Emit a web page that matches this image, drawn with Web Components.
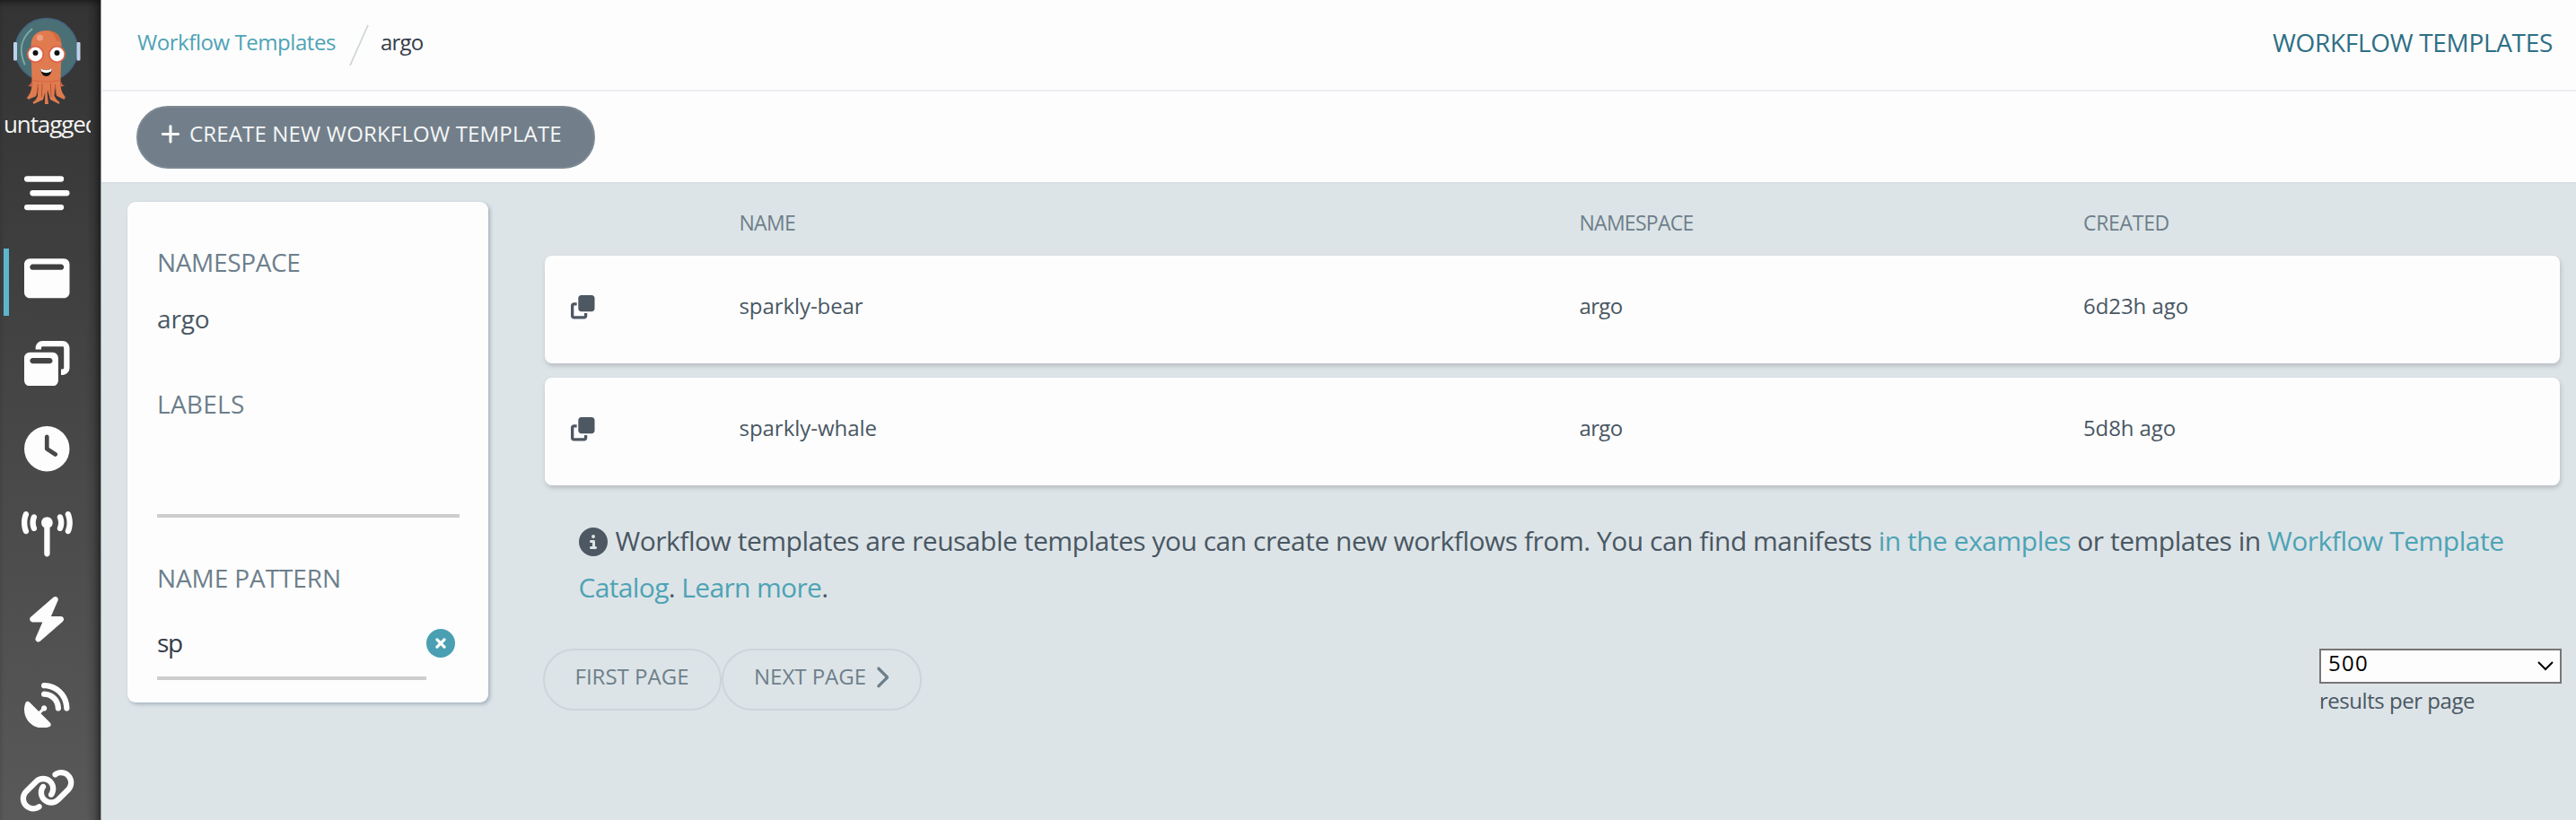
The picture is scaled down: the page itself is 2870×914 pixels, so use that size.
<!DOCTYPE html>
<html lang="en">
<head>
<meta charset="utf-8">
<title>Workflow Templates</title>
<style>
html,body{margin:0;height:100%;overflow:hidden}
body{font-family:"Open Sans","Noto Sans",sans-serif;background:#dde4e7;color:#495763}
</style>
</head>
<body>
<wf-app></wf-app>
<script>
const ICONS={
menu:['0 0 512 512','M32 64H416a32 32 0 0 1 0 64H32a32 32 0 0 1 0-64zM96 224H480a32 32 0 0 1 0 64H96a32 32 0 0 1 0-64zM32 384H416a32 32 0 0 1 0 64H32a32 32 0 0 1 0-64z'],
window:['0 0 512 512','M64 32C28.7 32 0 60.7 0 96V416c0 35.3 28.7 64 64 64H448c35.3 0 64-28.7 64-64V96c0-35.3-28.7-64-64-64H64zM96 96H416c17.7 0 32 14.3 32 32s-14.3 32-32 32H96c-17.7 0-32-14.3-32-32s14.3-32 32-32z'],
restore:['0 0 512 512','M432 64H208c-8.8 0-16 7.2-16 16V96H128V80c0-44.2 35.8-80 80-80H432c44.2 0 80 35.8 80 80V304c0 44.2-35.8 80-80 80H416V320h16c8.8 0 16-7.2 16-16V80c0-8.8-7.2-16-16-16zM0 192c0-35.3 28.7-64 64-64H320c35.3 0 64 28.7 64 64V448c0 35.3-28.7 64-64 64H64c-35.3 0-64-28.7-64-64V192zm64 32c0 17.7 14.3 32 32 32H288c17.7 0 32-14.3 32-32s-14.3-32-32-32H96c-17.7 0-32 14.3-32 32z'],
clock:['0 0 512 512','M256 0a256 256 0 1 1 0 512A256 256 0 1 1 256 0zM232 120V256c0 8 4 15.5 10.7 20l96 64c11 7.4 25.9 4.4 33.3-6.7s4.4-25.9-6.7-33.3L280 243.2V120c0-13.3-10.7-24-24-24s-24 10.7-24 24z'],
tower:['0 0 576 512','M80.3 44C69.8 69.9 64 98.2 64 128s5.8 58.1 16.3 84c6.6 16.4-1.3 35-17.7 41.7s-35-1.3-41.7-17.7C7.4 202.6 0 166.1 0 128S7.4 53.4 20.9 20C27.6 3.6 46.2-4.3 62.6 2.3S86.9 27.6 80.3 44zM555.1 20C568.6 53.4 576 89.9 576 128s-7.4 74.6-20.9 108c-6.6 16.4-25.3 24.3-41.7 17.7S489.1 228.4 495.7 212c10.5-25.9 16.3-54.2 16.3-84s-5.8-58.1-16.3-84C489.1 27.6 497 9 513.4 2.3s35 1.3 41.7 17.7zM352 128c0 23.7-12.9 44.4-32 55.4V480c0 17.7-14.3 32-32 32s-32-14.3-32-32V183.4c-19.1-11.1-32-31.7-32-55.4c0-35.3 28.7-64 64-64s64 28.7 64 64zM170.6 76.8C163.8 92.4 160 109.7 160 128s3.8 35.6 10.6 51.2c7.1 16.2-.3 35.1-16.5 42.1s-35.1-.3-42.1-16.5c-10.3-23.6-16-49.6-16-76.8s5.7-53.2 16-76.8c7.1-16.2 25.9-23.6 42.1-16.5s23.6 25.9 16.5 42.1zM464 51.2c10.3 23.6 16 49.6 16 76.8s-5.7 53.2-16 76.8c-7.1 16.2-25.9 23.6-42.1 16.5s-23.6-25.9-16.5-42.1c6.8-15.6 10.6-32.9 10.6-51.2s-3.8-35.6-10.6-51.2c-7.1-16.2 .3-35.1 16.5-42.1s35.1 .3 42.1 16.5z'],
bolt:['0 0 448 512','M349.4 44.6c5.9-13.7 1.5-29.7-10.6-38.5s-28.6-8-39.9 1.8l-256 224c-10 8.8-13.6 22.9-8.9 35.3S50.7 288 64 288H175.5L98.6 467.4c-5.9 13.7-1.5 29.7 10.6 38.5s28.6 8 39.9-1.8l256-224c10-8.8 13.6-22.9 8.9-35.3s-16.6-20.7-30-20.7H272.5L349.4 44.6z'],
dish:['0 0 512 512','M192 32c0-17.7 14.3-32 32-32C383.1 0 512 128.9 512 288c0 17.7-14.3 32-32 32s-32-14.3-32-32C448 164.3 347.7 64 224 64c-17.7 0-32-14.3-32-32zM60.6 220.6L164.7 324.7l28.4-28.4c-.7-2.6-1.1-5.4-1.1-8.3c0-17.7 14.3-32 32-32s32 14.3 32 32s-14.3 32-32 32c-2.9 0-5.6-.4-8.3-1.1l-28.4 28.4L291.4 451.4c14.5 14.5 11.8 38.8-7.3 46.3C260.5 506.9 234.9 512 208 512C93.1 512 0 418.9 0 304c0-26.9 5.1-52.5 14.4-76.1c7.5-19 31.8-21.8 46.3-7.3zM224 96c106 0 192 86 192 192c0 17.7-14.3 32-32 32s-32-14.3-32-32c0-70.7-57.3-128-128-128c-17.7 0-32-14.3-32-32s14.3-32 32-32z'],
link:['0 0 640 512','M579.8 267.7c56.5-56.5 56.5-148 0-204.5c-50-50-128.8-56.5-186.3-15.4l-1.6 1.1c-14.4 10.3-17.7 30.3-7.4 44.6s30.3 17.7 44.6 7.4l1.6-1.1c32.1-22.9 76-19.3 103.8 8.6c31.5 31.5 31.5 82.5 0 114L422.3 334.8c-31.5 31.5-82.5 31.5-114 0c-27.9-27.9-31.5-71.8-8.6-103.8l1.1-1.6c10.3-14.4 6.9-34.4-7.4-44.6s-34.4-6.9-44.6 7.4l-1.1 1.6C206.5 251.2 213 330 263 380c56.5 56.5 148 56.5 204.5 0L579.8 267.7zM60.2 244.3c-56.5 56.5-56.5 148 0 204.5c50 50 128.8 56.5 186.3 15.4l1.6-1.1c14.4-10.3 17.7-30.3 7.4-44.6s-30.3-17.7-44.6-7.4l-1.6 1.1c-32.1 22.9-76 19.3-103.8-8.6C74 372 74 321 105.5 289.5L217.7 177.2c31.5-31.5 82.5-31.5 114 0c27.9 27.9 31.5 71.8 8.6 103.9l-1.1 1.6c-10.3 14.4-6.9 34.4 7.4 44.6s34.4 6.9 44.6-7.4l1.1-1.6C433.5 260.8 427 182 377 132c-56.5-56.5-148-56.5-204.5 0L60.2 244.3z'],
clone:['0 0 512 512','M288 448H64V224h64V160H64c-35.3 0-64 28.7-64 64V448c0 35.3 28.7 64 64 64H288c35.3 0 64-28.7 64-64V384H288v64zm-64-96H448c35.3 0 64-28.7 64-64V64c0-35.3-28.7-64-64-64H224c-35.3 0-64 28.7-64 64V288c0 35.3 28.7 64 64 64z'],
info:['0 0 512 512','M256 512A256 256 0 1 0 256 0a256 256 0 1 0 0 512zM216 336h24V272H216c-13.3 0-24-10.7-24-24s10.7-24 24-24h48c13.3 0 24 10.7 24 24v88h8c13.3 0 24 10.7 24 24s-10.7 24-24 24H216c-13.3 0-24-10.7-24-24s10.7-24 24-24zm40-208a32 32 0 1 1 0 64 32 32 0 1 1 0-64z'],
plus:['0 0 448 512','M256 80c0-17.7-14.3-32-32-32s-32 14.3-32 32V224H48c-17.7 0-32 14.3-32 32s14.3 32 32 32H192V432c0 17.7 14.3 32 32 32s32-14.3 32-32V288H400c17.7 0 32-14.3 32-32s-14.3-32-32-32H256V80z'],
right:['0 0 320 512','M310.6 233.4c12.5 12.5 12.5 32.8 0 45.3l-192 192c-12.5 12.5-32.8 12.5-45.3 0s-12.5-32.8 0-45.3L242.7 256 73.4 86.6c-12.5-12.5-12.5-32.8 0-45.3s32.8-12.5 45.3 0l192 192z']
};
const define=(name,html,after)=>customElements.define(name,class extends HTMLElement{
  connectedCallback(){
    if(this.shadowRoot)return;
    this.attachShadow({mode:'open'}).innerHTML=html;
    if(after)after(this);
  }
});

define('wf-icon','<style>:host{display:inline-block;flex:none;line-height:0}svg{display:block;fill:currentColor}</style><svg><path/></svg>',el=>{
  const [box,d]=ICONS[el.getAttribute('name')],s=el.shadowRoot.querySelector('svg'),b=box.split(' '),h=+el.getAttribute('size');
  s.setAttribute('viewBox',box);s.setAttribute('height',h);s.setAttribute('width',h*b[2]/b[3]);
  s.firstChild.setAttribute('d',d);
});

// One line of text, tracked so that it takes up the width given in "w".
define('wf-text','<style>:host{display:inline-block;white-space:nowrap;line-height:40px;height:40px;flex:none;justify-self:start}</style><slot></slot>',el=>{
  el.style.fontSize=el.getAttribute('size')+'px';
  const w=+el.getAttribute('w');
  if(w)queueMicrotask(()=>{
    const n=el.textContent.length;
    el.style.letterSpacing=((w-el.getBoundingClientRect().width)/n).toFixed(3)+'px';
    el.style.width=w+'px';
  });
});

define('wf-logo',`<style>:host{display:block;height:100px}svg{display:block}</style>
<svg width="104" height="104" viewBox="0 16 104 104">
<circle cx="51.7" cy="55.3" r="34.8" fill="#4a7076" stroke="#456383" stroke-width="1.4"/>
<path d="M27.500 71.500C21 57 23 43 35.500 32.500" fill="none" stroke="#79a9a4" stroke-width="2" stroke-linecap="round"/>
<path d="M34.600 51C34.600 39 42 34 51.500 34S68.500 39 68.500 51L67.500 90C67 98 69 104 73.500 109L64 107L61 96L60.500 107L66 116L56 111L53 100L52.500 104L54 116L50 116L50.500 102L48 111L37.500 116L42 107L42.500 97L39 108L29.500 109.500C35 104 36 97 35.500 90Z" fill="#e07b50"/>
<path d="M35.500 88C35 92 34 95.500 30.500 95L35.500 97zM67.500 88C68 92 69 95.500 72.500 95L67.500 97z" fill="#da6449"/>
<path d="M54 34.300Q61 37 62.500 45Q68 45 68.500 51C68.500 39 62 35 54 34.300z" fill="#d56a3d"/>
<path d="M36 89.500Q52 92.500 67 89.500" fill="none" stroke="#dc6b46" stroke-width="1.500"/>
<path d="M41.500 96L39.500 106L31 110M45.500 96L44 109L37 115M51.500 96V115M57.500 96L59 109L66 115M62 96L64 106L72 110" fill="none" stroke="#e07b50" stroke-width="2"/>
<path d="M42.300 94L41 105M47 93L46.300 108M56.300 93L57 108M61.500 94L62.500 105" stroke="#b9552f" stroke-width="1"/>
<circle cx="44.500" cy="42" r="3.600" fill="#ed9f82"/>
<circle cx="39.500" cy="60.500" r="8.800" fill="#fdfdfd" stroke="#dc5f45" stroke-width="1.800"/>
<circle cx="63.500" cy="60.500" r="8.800" fill="#fdfdfd" stroke="#dc5f45" stroke-width="1.800"/>
<circle cx="39.500" cy="59" r="3" fill="#111"/><circle cx="63.500" cy="59" r="3" fill="#111"/>
<path d="M45 76.300Q51.500 80 58 76.300Q57 85 51.500 85T45 76.300z" fill="#111"/>
<path d="M45 76.300Q51.500 80 58 76.300L57 79.500Q51.500 83 46 79.500z" fill="#fff"/>
<rect x="15" y="47" width="4" height="20.500" rx="1" fill="#bdd2ea"/><rect x="85.500" y="47" width="4" height="20.500" rx="1" fill="#bdd2ea"/>
</svg>`);

define('wf-nav-item',`<style>:host{display:flex;flex:none;height:95.200px;width:104.600px;align-items:center;justify-content:center;color:#fdfdfd;position:relative}
:host([active])::before{content:"";position:absolute;left:4px;top:14.500px;width:6px;height:75px;background:#5cb6cd}</style><slot></slot>`);

define('wf-sidebar',`<style>:host{display:flex;flex-direction:column;width:112px;flex:none;box-sizing:border-box;padding-top:16px;height:914px;overflow:hidden;color:#f4f4f4;background:linear-gradient(90deg,transparent 96px,rgba(0,0,0,.12) 104px,rgba(0,0,0,.4) 112px),linear-gradient(#343434 0,#3a3a3a 20%,#4a4a4a 60%,#595959);box-shadow:inset 0 6px 8px -5px #111,1px 0 #9b9fa1;z-index:1}
wf-logo,.v{flex:none}.v{overflow:hidden;margin:2px 0 9px 4px;width:96.500px;height:40.200px}</style>
<wf-logo></wf-logo><div class="v"><wf-text size="26" w="105.500">untagged</wf-text></div>
${['menu','window','restore','clock','tower','bolt','dish','link'].map((n,i)=>`<wf-nav-item ${i==1?'active':''}><wf-icon name="${n}" size="50.500"></wf-icon></wf-nav-item>`).join('')}`);

define('wf-topbar',`<style>:host{display:flex;height:100px;border-bottom:2px solid #eeeff4;background:#fdfdfd;box-sizing:content-box}
nav{display:flex;flex:1;padding:26.500px 0 0 41px;color:#4da3b5}
svg{margin:0 13px 0 14px}b{font-weight:400;color:#363c4a}.t{color:#2e6f86;padding:27px 26px 0 0}</style>
<nav><wf-text size="24" w="221">Workflow Templates</wf-text><svg width="23" height="48"><path d="M2 46L22 1" stroke="#ced6da" stroke-width="1.800"/></svg><b><wf-text size="24" w="47.500">argo</wf-text></b></nav><div class="t"><wf-text size="28" w="312">WORKFLOW TEMPLATES</wf-text></div>`);

define('wf-button',`<style>:host{display:flex;box-sizing:border-box;height:69px;border-radius:35px;border:2px solid #ccd5da;color:#6d7f8b;padding:9px 34px 0;flex:none}
:host([primary]){background:#727f8a;border-color:#7d8993;color:#f6f7f8;padding:9px 25px 0;height:70px}</style><slot></slot>`);

define('wf-toolbar',`<style>:host{display:flex;height:101px;background:#fdfdfd;box-sizing:border-box;padding:16px 0 0 40px;box-shadow:0 1px 2px #d4dade}
wf-button{width:511px}wf-icon{margin:8px 10px 0 0}</style>
<wf-button primary><wf-icon name="plus" size="25"></wf-icon><wf-text size="24" w="415">CREATE NEW WORKFLOW TEMPLATE</wf-text></wf-button>`);

define('wf-filters',`<style>:host{display:flex;flex-direction:column;box-sizing:border-box;width:402px;height:558.500px;background:#fdfdfd;border-radius:9px;box-shadow:2px 2px 4px #9fb0bd;padding:47px 33px 0;color:#6d7f8b;align-items:flex-start}
.d{color:#495763}.k{color:#363c4a}hr{margin:0;border:0;height:4px;background:#cdcdcd;width:337px}
.r{display:flex;width:337px}.x{margin:5px 0 0 272px}
</style>
<wf-text size="28" w="159.500">NAMESPACE</wf-text>
<wf-text class="d" size="28" w="58.500" style="margin-top:23px">argo</wf-text>
<wf-text size="28" w="97.500" style="margin-top:55px">LABELS</wf-text>
<hr style="margin-top:103px">
<wf-text size="28" w="205" style="margin-top:47px">NAME PATTERN</wf-text>
<div class="r" style="margin-top:32px;height:58.500px"><wf-text class="k" size="28" w="28">sp</wf-text><svg class="x" width="32" height="32"><circle cx="16" cy="16" r="16" fill="#4aa0b2"/><path d="M11.900 11.900L20.100 20.100M20.100 11.900L11.900 20.100" stroke="#fff" stroke-width="3.200" stroke-linecap="round"/></svg></div>
<hr style="width:300px">`);

define('wf-row',`<style>:host{display:grid;grid-template-columns:187.500px 936px 561.500px 1fr;box-sizing:border-box;height:120px;padding:36px 0 0 29.500px;margin-bottom:16px;background:#fdfdfd;border-radius:8px;box-shadow:1px 3px 5px rgba(70,80,90,.25);align-items:start}
:host([head]){height:70px;background:none;box-shadow:none;margin:0;padding-top:13px;color:#6d7f8b}</style><slot></slot>`);

define('wf-table',`<style>:host{display:block;width:2245.500px;margin-left:62.500px}wf-icon{margin-top:8px;color:#4e5863}</style>
<wf-row head><i></i><wf-text size="23" w="62.500">NAME</wf-text><wf-text size="23" w="127">NAMESPACE</wf-text><wf-text size="23" w="96">CREATED</wf-text></wf-row>
<wf-row><wf-icon name="clone" size="26.500"></wf-icon><wf-text size="24" w="138">sparkly-bear</wf-text><wf-text size="24" w="48">argo</wf-text><wf-text size="24" w="117">6d23h ago</wf-text></wf-row>
<wf-row><wf-icon name="clone" size="26.500"></wf-icon><wf-text size="24" w="153.500">sparkly-whale</wf-text><wf-text size="24" w="48">argo</wf-text><wf-text size="24" w="103">5d8h ago</wf-text></wf-row>`);

define('wf-note',`<style>:host{display:flex;flex-direction:column;margin:26px 0 0 100.500px;align-items:flex-start;gap:12px;padding-top:16px}a{color:#4da3b5}.l{display:flex}wf-icon{margin:5px 9px 0 0;color:#4e5863}</style>
<div class="l"><wf-icon name="info" size="32"></wf-icon><wf-text size="30" w="2104">Workflow templates are reusable templates you can create new workflows from. You can find manifests <a>in the examples</a> or templates in <a>Workflow Template</a></wf-text></div>
<wf-text size="30" w="278"><a>Catalog</a>. <a>Learn more</a>.</wf-text>`);

define('wf-pager',`<style>:host{display:flex;margin:48px 16px 0 60.500px}.s{margin-left:auto;width:270px}
.b{display:flex;box-sizing:border-box;height:39px;border:2px solid #767676;background:#fdfdfd;color:#000;padding:0 7px 0 8px;justify-content:space-between}
.b svg{margin-top:12px}.b wf-text{margin-top:-6px}.s>wf-text{margin-top:-1px}wf-icon{margin:8px 0 0 9px}</style>
<wf-button style="width:199.500px"><wf-text size="24" w="127">FIRST PAGE</wf-text></wf-button><wf-button style="width:223px"><wf-text size="24" w="125">NEXT PAGE</wf-text><wf-icon name="right" size="26"></wf-icon></wf-button>
<div class="s"><div class="b"><wf-text size="24" w="45">500</wf-text><svg width="18" height="12"><path d="M1 1L9 9L17 1" fill="none" stroke="#000" stroke-width="2"/></svg></div><wf-text size="24" w="173">results per page</wf-text></div>`);

define('wf-app',`<style>:host{display:flex;height:914px}main{flex:1}.c{display:flex;padding:12px 0 0 30px}.c>wf-filters{margin-top:9.500px;flex:none}.m{flex:1;min-width:0}</style>
<wf-sidebar></wf-sidebar><main><wf-topbar></wf-topbar><wf-toolbar></wf-toolbar><div class="c"><wf-filters></wf-filters><div class="m"><wf-table></wf-table><wf-note></wf-note><wf-pager></wf-pager>
</div></div></main>`);
</script>
</body>
</html>
